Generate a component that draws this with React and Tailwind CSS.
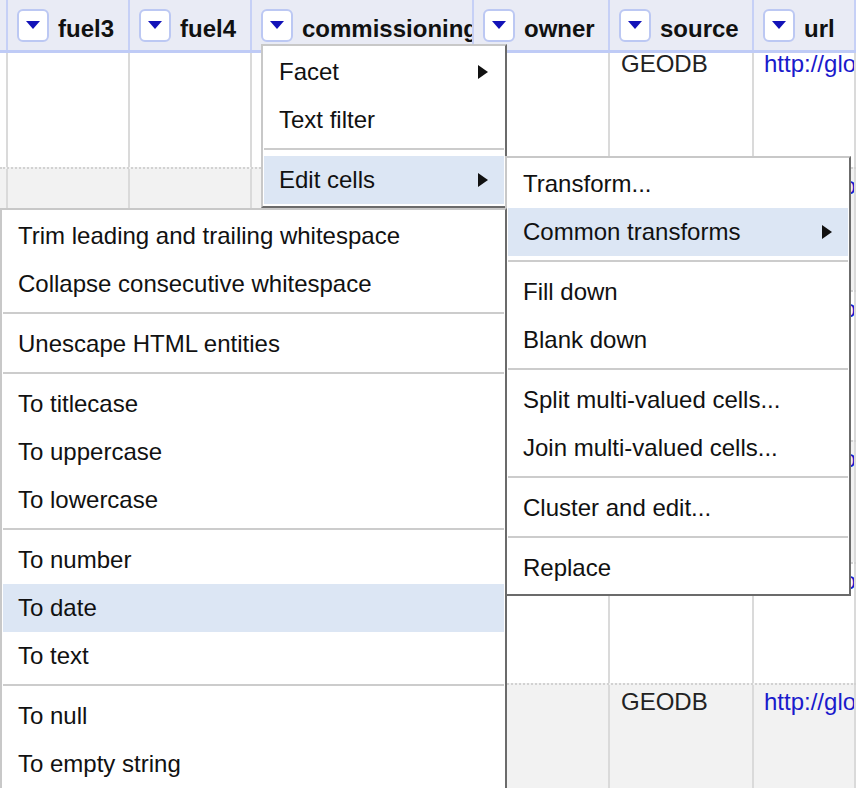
import React from 'react';

const columns = [
  { key: 'idx', label: null, width: 'w-[8px]' },
  { key: 'fuel3', label: 'fuel3', width: 'w-[122px]' },
  { key: 'fuel4', label: 'fuel4', width: 'w-[122px]' },
  { key: 'commissioning', label: 'commissioning_year', width: 'w-[222px]' },
  { key: 'owner', label: 'owner', width: 'w-[136px]' },
  { key: 'source', label: 'source', width: 'w-[144px]' },
  { key: 'url', label: 'url', width: 'flex-1' },
];

// row heights and backgrounds (first row is partly scrolled under the header)
const rows = [
  { h: 'h-[114px]', bg: 'bg-white', pad: '-mt-[3px]', first: true },
  { h: 'h-[123px]', bg: 'bg-[#f2f2f2]', pad: 'pt-[3px]' },
  { h: 'h-[150px]', bg: 'bg-white', pad: 'pt-[3px]' },
  { h: 'h-[122px]', bg: 'bg-[#f2f2f2]', pad: 'pt-[3px]' },
  { h: 'h-[121px]', bg: 'bg-white', pad: 'pt-[3px]' },
  { h: 'h-[140px]', bg: 'bg-[#f2f2f2]', pad: 'pt-[3px]' },
];

const columnMenu = [
  { label: 'Facet', arrow: true },
  { label: 'Text filter' },
  { sep: true },
  { label: 'Edit cells', arrow: true, active: true },
];

const editCellsMenu = [
  { label: 'Transform...' },
  { label: 'Common transforms', arrow: true, active: true },
  { sep: true },
  { label: 'Fill down' },
  { label: 'Blank down' },
  { sep: true },
  { label: 'Split multi-valued cells...' },
  { label: 'Join multi-valued cells...' },
  { sep: true },
  { label: 'Cluster and edit...' },
  { sep: true },
  { label: 'Replace' },
];

const commonMenu = [
  { label: 'Trim leading and trailing whitespace' },
  { label: 'Collapse consecutive whitespace' },
  { sep: true },
  { label: 'Unescape HTML entities' },
  { sep: true },
  { label: 'To titlecase' },
  { label: 'To uppercase' },
  { label: 'To lowercase' },
  { sep: true },
  { label: 'To number' },
  { label: 'To date', active: true },
  { label: 'To text' },
  { sep: true },
  { label: 'To null' },
  { label: 'To empty string' },
  { label: 'To blank' },
];

function DropButton() {
  return (
    <div className="flex h-[33px] w-[32px] shrink-0 items-center justify-center rounded-[6px] border-2 border-[#bcc8f3] bg-white">
      <svg width="14" height="8" viewBox="0 0 14 8">
        <polygon points="0,0 14,0 7,8" fill="#1212b8" />
      </svg>
    </div>
  );
}

function Menu({ items, className }) {
  return (
    <div
      className={`absolute border-2 border-t-[#c8c8c8] border-l-[#c8c8c8] border-r-[#6b6b6b] border-b-[#6b6b6b] bg-white px-[1px] py-[2px] ${className}`}
    >
      {items.map((item, i) =>
        item.sep ? (
          <div key={i} className="mt-[4px] mb-[6px] h-[2px] bg-[#cccccc]" />
        ) : (
          <div
            key={i}
            className={`flex h-[48px] items-center pl-[15px] text-[24px] whitespace-nowrap text-[#111] ${
              item.active ? 'bg-[#dce6f4]' : ''
            }`}
          >
            <span>{item.label}</span>
            {item.arrow && (
              <svg className="ml-auto mr-[16px]" width="10" height="14" viewBox="0 0 10 14">
                <polygon points="0,0 10,7 0,14" fill="#111" />
              </svg>
            )}
          </div>
        )
      )}
    </div>
  );
}

export default function App() {
  return (
    <div className="relative h-[788px] w-[856px] overflow-hidden bg-white font-['Liberation_Sans',Arial,sans-serif] text-[#222]">
      {/* Column headers */}
      <div className="flex h-[53px] border-b-[3px] border-[#bfcbf6] bg-[#e9ebf5]">
        {columns.map((col) => (
          <div
            key={col.key}
            className={`flex h-full shrink-0 items-center overflow-hidden border-r-2 border-[#c6d0f6] ${col.width} ${
              col.label ? 'pl-[9px]' : ''
            }`}
          >
            {col.label && (
              <>
                <DropButton />
                <span className="ml-[9px] pt-[7px] whitespace-nowrap text-[24px] font-bold text-[#111]">{col.label}</span>
              </>
            )}
          </div>
        ))}
      </div>

      {/* Data rows */}
      <div className="flex flex-col">
        {rows.map((row, r) => (
          <div
            key={r}
            className={`flex shrink-0 ${row.h} ${row.bg} ${row.first ? '' : 'border-t-2 border-dotted border-[#d2d2d2]'}`}
          >
            {columns.map((col) => (
              <div
                key={col.key}
                className={`h-full shrink-0 overflow-hidden border-r-2 border-[#dadada] text-[24px] leading-[28px] whitespace-nowrap ${col.width}`}
              >
                {col.key === 'source' && <div className={`pl-[11px] ${row.pad}`}>GEODB</div>}
                {col.key === 'url' && (
                  <div className={`pl-[10px] text-[#1a1acc] ${row.pad}`}>
                    http://globalenergyobservatory.org/geoid/{42500 + r}
                  </div>
                )}
              </div>
            ))}
          </div>
        ))}
      </div>

      {/* Column dropdown and its submenus */}
      <Menu items={columnMenu} className="left-[261px] top-[44px] z-10 w-[246px]" />
      <Menu items={editCellsMenu} className="left-[505px] top-[156px] z-20 w-[346px]" />
      <Menu items={commonMenu} className="left-0 top-[208px] z-30 w-[507px]" />
    </div>
  );
}
